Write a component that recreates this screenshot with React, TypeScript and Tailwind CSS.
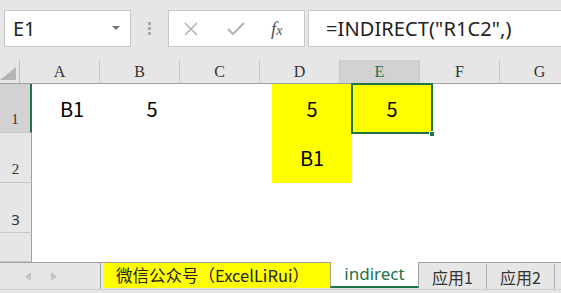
import React from "react";

const cols = ["A", "B", "C", "D", "E", "F", "G"];

type Cell = { text?: string; fill?: boolean; selected?: boolean };

const rows: { n: number; h: string; cells: Cell[] }[] = [
  {
    n: 1,
    h: "h-[49px]",
    cells: [
      { text: "B1" },
      { text: "5" },
      {},
      { text: "5", fill: true },
      { text: "5", fill: true, selected: true },
      {},
      {},
    ],
  },
  {
    n: 2,
    h: "h-[50px]",
    cells: [{}, {}, {}, { text: "B1", fill: true }, {}, {}, {}],
  },
  { n: 3, h: "h-[50px]", cells: [{}, {}, {}, {}, {}, {}, {}] },
  { n: 0, h: "h-[29px]", cells: [{}, {}, {}, {}, {}, {}, {}] },
];

export default function App() {
  return (
    <div className="w-[561px] h-[293px] overflow-hidden bg-[#e6e6e6] flex flex-col font-['Noto_Sans','Noto_Sans_CJK_SC',sans-serif]">
      {/* Formula toolbar */}
      <div className="h-[60px] flex items-start pt-[10px] pl-[4px] shrink-0">
        <div className="w-[127px] h-[37px] bg-white border border-[#c8c8c8] flex items-center justify-between pl-[8px] pr-[10px]">
          <span className="text-[20px] text-[#222] leading-none">E1</span>
          <svg width="8" height="5" viewBox="0 0 8 5">
            <path d="M0 0 H8 L4 4 Z" fill="#777" />
          </svg>
        </div>
        <div className="w-[37px] h-[37px] flex items-center justify-center">
          <div className="flex flex-col gap-[2px]">
            <span className="w-[3px] h-[3px] bg-[#a8a8a8]" />
            <span className="w-[3px] h-[3px] bg-[#a8a8a8]" />
            <span className="w-[3px] h-[3px] bg-[#a8a8a8]" />
          </div>
        </div>
        <div className="w-[137px] h-[37px] bg-white border border-[#c8c8c8] flex items-center pl-[14px]">
          <svg width="16" height="16" viewBox="0 0 16 16">
            <path d="M2 2 L14 14 M14 2 L2 14" stroke="#b4b4b4" strokeWidth="1.6" />
          </svg>
          <svg width="18" height="16" viewBox="0 0 18 16" className="ml-[28px]">
            <path d="M1 8 L6 13 L17 2" stroke="#b4b4b4" strokeWidth="2.2" fill="none" />
          </svg>
          <span className="ml-[26px] font-['Liberation_Serif',serif] italic text-[19px] text-[#555] leading-none">
            f<span className="text-[14px]">x</span>
          </span>
        </div>
        <div className="ml-[3px] flex-1 h-[37px] bg-white border border-[#c8c8c8] border-r-0 flex items-center pl-[17px]">
          <span className="text-[20px] text-[#222] leading-none tracking-[0.1px]">=INDIRECT("R1C2",)</span>
        </div>
      </div>

      {/* Column headers */}
      <div className="h-[24px] flex shrink-0 border-b border-[#a0a0a0]">
        <div className="w-[32px] border-r border-[#c0c0c0] flex items-end justify-end pr-[3px] pb-[3px]">
          <svg width="16" height="13" viewBox="0 0 16 13">
            <path d="M16 0 V13 H0 Z" fill="#b4b4b4" />
          </svg>
        </div>
        {cols.map((c) => (
          <div
            key={c}
            className={`w-[80px] shrink-0 border-r border-[#c8c8c8] flex items-center justify-center font-['Liberation_Serif',serif] text-[16px] ${
              c === "E" ? "bg-[#d2d2d2] text-[#217346]" : "text-[#333]"
            }`}
          >
            {c}
          </div>
        ))}
      </div>

      {/* Grid rows */}
      <div className="flex-1 flex flex-col">
        {rows.map((r, ri) => (
          <div key={ri} className={`${r.h} flex shrink-0`}>
            <div
              className={`w-[32px] shrink-0 flex items-end justify-center pb-[5px] text-[15px] leading-none border-b border-[#c8c8c8] ${
                r.n === 1
                  ? "bg-[#d2d2d2] border-r-2 border-r-[#217346] font-['Liberation_Serif',serif] text-[#333]"
                  : r.n === 2
                  ? "border-r border-r-[#a0a0a0] font-['Liberation_Serif',serif] text-[#333]"
                  : "border-r border-r-[#a0a0a0] text-[#333]"
              }`}
            >
              {r.n ? r.n : ""}
            </div>
            {r.cells.map((cell, ci) => (
              <div
                key={ci}
                className={`w-[80px] shrink-0 flex items-center justify-center text-[20px] text-black font-['Noto_Sans_CJK_SC',sans-serif] ${
                  cell.fill ? "bg-[#ffff00]" : "bg-white"
                } ${cell.selected ? "relative" : ""}`}
              >
                {cell.text}
                {cell.selected && (
                  <>
                    <div className="absolute -left-[1px] -top-[1px] -right-[1px] -bottom-[1px] border-2 border-[#217346]" />
                    <div className="absolute -right-[3px] -bottom-[4px] w-[6px] h-[6px] bg-[#217346] border border-white" />
                  </>
                )}
              </div>
            ))}
          </div>
        ))}
      </div>

      {/* Sheet tabs */}
      <div className="h-[31px] shrink-0 border-t border-[#a0a0a0] flex items-start relative">
        <div className="w-[101px] h-[26px] flex items-center pl-[25px] gap-[20px] border-r border-[#a0a0a0]">
          <svg width="6" height="9" viewBox="0 0 6 9">
            <path d="M6 0 V9 L0 4.5 Z" fill="#c4c4c4" />
          </svg>
          <svg width="6" height="9" viewBox="0 0 6 9">
            <path d="M0 0 V9 L6 4.5 Z" fill="#c4c4c4" />
          </svg>
        </div>
        <div className="ml-[3px] w-[226px] h-[25px] bg-[#ffff00] flex items-center pl-[12px] text-[16.5px] text-[#222] whitespace-nowrap font-['Noto_Sans_CJK_SC',sans-serif]">
          微信公众号（ExcelLiRui）
        </div>
        <div className="-mt-[1px] w-[89px] h-[26px] bg-white border-x border-[#a0a0a0] border-b-2 border-b-[#217346] flex items-center justify-center text-[17px] text-[#217346]">
          indirect
        </div>
        <div className="w-[68px] h-[25px] flex items-center justify-center text-[16px] text-[#333] border-r border-[#b0b0b0] my-[1px] font-['Noto_Sans_CJK_SC',sans-serif]">
          应用1
        </div>
        <div className="w-[68px] h-[25px] flex items-center justify-center text-[16px] text-[#333] border-r border-[#b0b0b0] my-[1px] font-['Noto_Sans_CJK_SC',sans-serif]">
          应用2
        </div>
        <div className="absolute left-0 right-0 top-[26px] h-[1px] bg-[#d0d0d0]" />
      </div>
    </div>
  );
}
